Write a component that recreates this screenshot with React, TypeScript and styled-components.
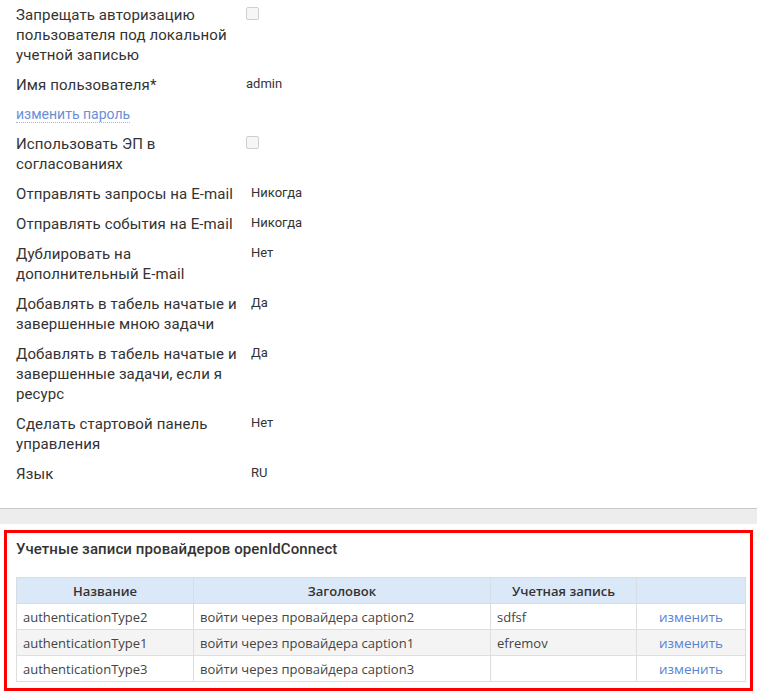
import React from "react";
import styled, { createGlobalStyle } from "styled-components";

const Global = createGlobalStyle`
  html, body { margin: 0; padding: 0; background: #ffffff; }
  body { font-family: Roboto, "Noto Sans", sans-serif; color: #333333; }
`;

const Page = styled.div`
  display: flex;
  flex-direction: column;
  width: 757px;
`;

const SettingsPanel = styled.div`
  display: flex;
  flex-direction: column;
  padding: 0 16px 19px 16px;
  background: #ffffff;
  border-bottom: 1px solid #c9c9c9;
`;

const Row = styled.div`
  display: grid;
  grid-template-columns: 226px 1fr;
  column-gap: 4px;
  align-items: start;
`;

const Label = styled.div`
  font-size: 15px;
  line-height: 20px;
  letter-spacing: 0.12px;
  padding: 5px 0;
  color: #333333;
`;

const Value = styled.div<{ $indent?: boolean }>`
  font-size: 13px;
  line-height: 20px;
  padding: 4px 0 0 ${(p) => (p.$indent ? "5px" : "0")};
  color: #333333;
`;

const CheckBox = styled.span`
  display: block;
  width: 11px;
  height: 11px;
  margin-top: 7px;
  border: 1px solid #cfcfcf;
  border-radius: 2px;
  background: #f6f6f6;
`;

const PasswordLink = styled.a`
  font-size: 14px;
  line-height: 20px;
  margin: 4px 0 5px;
  color: #6a8fd8;
  text-decoration: none;
  border-bottom: 1px dotted #9fb6e6;
  height: 18px;
  cursor: pointer;
`;

const LinkRow = styled.div`
  display: flex;
  height: 29px;
  align-items: flex-start;
`;

const Separator = styled.div`
  height: 15px;
  background: #ededed;
`;

const LowerArea = styled.div`
  padding: 6px 4px 7px 4px;
  background: #ffffff;
`;

const Highlight = styled.div`
  border: 3px solid #ff0000;
  padding: 6px 5px 6px 9px;
`;

const Title = styled.div`
  font-size: 15px;
  font-weight: 500;
  line-height: 20px;
  letter-spacing: 0.1px;
  color: #333333;
  margin-bottom: 18px;
`;

const Table = styled.table`
  width: 729px;
  border-collapse: collapse;
  font-family: "Open Sans", "Noto Sans", sans-serif;
  font-size: 13px;
  color: #444444;
  table-layout: fixed;
`;

const Col = styled.col<{ $w: number }>`
  width: ${(p) => p.$w}px;
`;

const HeadCell = styled.th`
  height: 25px;
  padding: 0 6px;
  background: #dbe8f8;
  border: 1px solid #d6dde6;
  font-weight: 600;
  color: #333333;
  text-align: center;
`;

const BodyRow = styled.tr<{ $striped?: boolean }>`
  background: ${(p) => (p.$striped ? "#f4f4f4" : "#ffffff")};
`;

const Cell = styled.td<{ $center?: boolean }>`
  height: 25px;
  padding: 0 6px;
  border: 1px solid #dedede;
  text-align: ${(p) => (p.$center ? "center" : "left")};
  white-space: nowrap;
  overflow: hidden;
`;

const EditLink = styled.a`
  color: #5b82d2;
  font-size: 13.5px;
  text-decoration: none;
  cursor: pointer;
`;

type Setting = { label: string; value?: string; check?: boolean; indent?: boolean };

const before: Setting[] = [
  { label: "Запрещать авторизацию пользователя под локальной учетной записью", check: true },
  { label: "Имя пользователя*", value: "admin" },
];

const after: Setting[] = [
  { label: "Использовать ЭП в согласованиях", check: true },
  { label: "Отправлять запросы на E-mail", value: "Никогда", indent: true },
  { label: "Отправлять события на E-mail", value: "Никогда", indent: true },
  { label: "Дублировать на дополнительный E-mail", value: "Нет", indent: true },
  { label: "Добавлять в табель начатые и завершенные мною задачи", value: "Да", indent: true },
  { label: "Добавлять в табель начатые и завершенные задачи, если я ресурс", value: "Да", indent: true },
  { label: "Сделать стартовой панель управления", value: "Нет", indent: true },
  { label: "Язык", value: "RU", indent: true },
];

const providers = [
  { name: "authenticationType2", caption: "войти через провайдера caption2", account: "sdfsf" },
  { name: "authenticationType1", caption: "войти через провайдера caption1", account: "efremov" },
  { name: "authenticationType3", caption: "войти через провайдера caption3", account: "" },
];

const SettingRow = ({ s }: { s: Setting }) => (
  <Row>
    <Label>{s.label}</Label>
    {s.check ? <CheckBox /> : <Value $indent={s.indent}>{s.value}</Value>}
  </Row>
);

export default function App() {
  return (
    <Page>
      <Global />
      <SettingsPanel>
        {before.map((s) => (
          <SettingRow key={s.label} s={s} />
        ))}
        <LinkRow>
          <PasswordLink>изменить пароль</PasswordLink>
        </LinkRow>
        {after.map((s) => (
          <SettingRow key={s.label} s={s} />
        ))}
      </SettingsPanel>
      <Separator />
      <LowerArea>
        <Highlight>
          <Title>Учетные записи провайдеров openIdConnect</Title>
          <Table>
            <colgroup>
              <Col $w={177} />
              <Col $w={297} />
              <Col $w={146} />
              <Col $w={109} />
            </colgroup>
            <thead>
              <tr>
                <HeadCell>Название</HeadCell>
                <HeadCell>Заголовок</HeadCell>
                <HeadCell>Учетная запись</HeadCell>
                <HeadCell></HeadCell>
              </tr>
            </thead>
            <tbody>
              {providers.map((p, i) => (
                <BodyRow key={p.name} $striped={i === 1}>
                  <Cell>{p.name}</Cell>
                  <Cell>{p.caption}</Cell>
                  <Cell>{p.account}</Cell>
                  <Cell $center>
                    <EditLink>изменить</EditLink>
                  </Cell>
                </BodyRow>
              ))}
            </tbody>
          </Table>
        </Highlight>
      </LowerArea>
    </Page>
  );
}
